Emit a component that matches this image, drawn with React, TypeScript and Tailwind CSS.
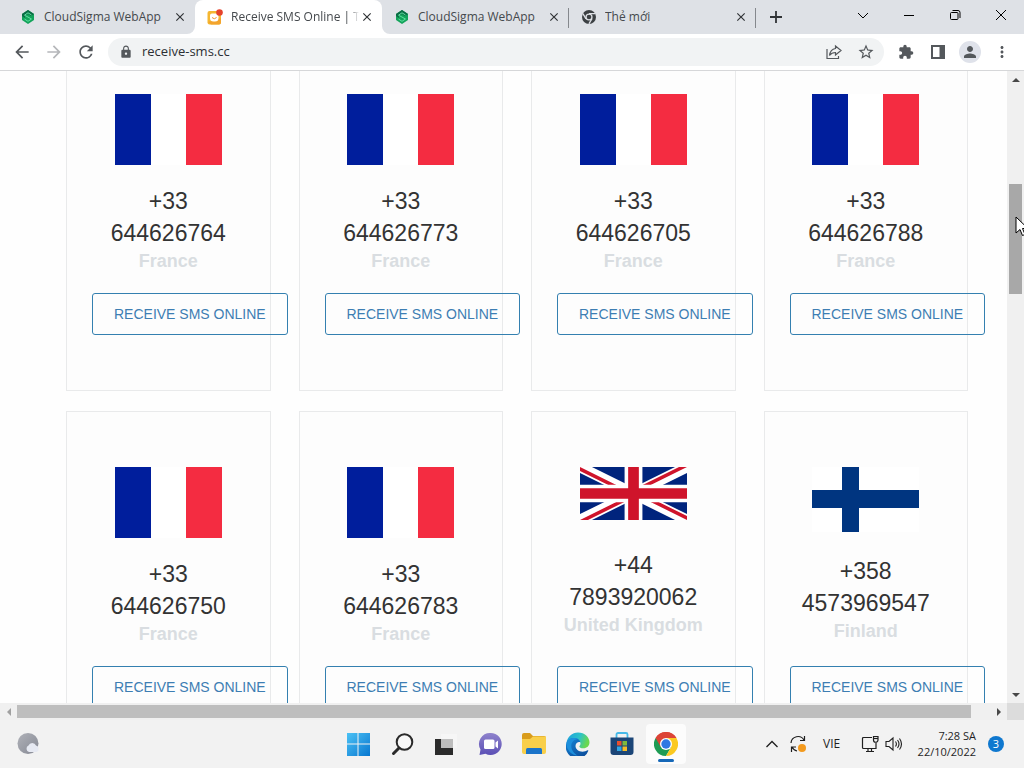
import React from 'react';
import clsx from 'clsx';
import {
  MdArrowBack,
  MdArrowForward,
  MdClose,
  MdExtension,
  MdLock,
  MdMoreVert,
  MdPerson,
  MdRefresh,
  MdStarBorder,
} from 'react-icons/md';

type Country = 'France' | 'United Kingdom' | 'Finland';

interface PhoneNumber {
  prefix: string;
  number: string;
  country: Country;
}

const phoneNumbers: PhoneNumber[] = [
  { prefix: '+33', number: '644626764', country: 'France' },
  { prefix: '+33', number: '644626773', country: 'France' },
  { prefix: '+33', number: '644626705', country: 'France' },
  { prefix: '+33', number: '644626788', country: 'France' },
  { prefix: '+33', number: '644626750', country: 'France' },
  { prefix: '+33', number: '644626783', country: 'France' },
  { prefix: '+44', number: '7893920062', country: 'United Kingdom' },
  { prefix: '+358', number: '4573969547', country: 'Finland' },
];

/* ---------- Flags ---------- */

const Flag: React.FC<{ country: Country }> = ({ country }) => {
  if (country === 'United Kingdom') {
    return (
      <svg viewBox="0 0 60 30" className="h-[53px] w-[107px]" preserveAspectRatio="none" role="img" aria-label={country}>
        <clipPath id="uk-diagonals">
          <path d="M30 15h30v15zM30 15v15H0zM30 15H0V0zM30 15V0h30z" />
        </clipPath>
        <path d="M0 0h60v30H0z" fill="#00247d" />
        <path d="M0 0l60 30M60 0L0 30" stroke="#fff" strokeWidth="6" />
        <path d="M0 0l60 30M60 0L0 30" clipPath="url(#uk-diagonals)" stroke="#cf142b" strokeWidth="4" />
        <path d="M30 0v30M0 15h60" stroke="#fff" strokeWidth="10" />
        <path d="M30 0v30M0 15h60" stroke="#cf142b" strokeWidth="6" />
      </svg>
    );
  }

  if (country === 'Finland') {
    return (
      <svg viewBox="0 0 107 65" className="h-[65px] w-[107px]" role="img" aria-label={country}>
        <path d="M0 0h107v65H0z" fill="#fff" />
        <path d="M30 0h17v65H30zM0 23h107v18H0z" fill="#003580" />
      </svg>
    );
  }

  return (
    <svg viewBox="0 0 107 71" className="h-[71px] w-[107px]" role="img" aria-label={country}>
      <path d="M0 0h36v71H0z" fill="#001e9c" />
      <path d="M36 0h35v71H36z" fill="#fff" />
      <path d="M71 0h36v71H71z" fill="#f42c41" />
    </svg>
  );
};

/* ---------- Tab icons ---------- */

const CloudSigmaIcon = () => (
  <svg viewBox="0 0 16 16" className="size-4 shrink-0">
    <path d="M8 1l6 4v6l-6 4-6-4V5z" fill="#12a35a" />
    <path d="M8 1l6 4-3 2-3-2-3 2v2L2 7V5z" fill="#0b6b45" />
    <path d="M11.500 6L8 3.800 4.500 6.200 11.500 10 8 12.300 4.500 10" fill="none" stroke="#5fe0a0" strokeWidth="1" />
  </svg>
);

const SmsIcon = () => (
  <svg viewBox="0 0 16 16" className="size-4 shrink-0">
    <rect x="0.500" y="2" width="13.500" height="13.500" rx="2" fill="#f5b731" />
    <path d="M1 13l3 2.500h8a2 2 0 0 0 2-2V9z" fill="#f3a42c" />
    <path d="M3 6.500a2 2 0 0 1 2-2h4.500l2 2.500v2a3.500 3.500 0 0 1-3.500 3.500H6.500A3.500 3.500 0 0 1 3 9z" fill="#fff" />
    <path d="M5 8.500q2.300 2.500 4.600 0" fill="none" stroke="#f0932b" strokeWidth="1" />
    <circle cx="12.500" cy="3.500" r="3.300" fill="#e5432d" />
  </svg>
);

const ChromeMonoIcon = () => (
  <svg viewBox="0 0 16 16" className="size-4 shrink-0">
    <circle cx="8" cy="8" r="7" fill="#3c4043" />
    <path d="M8 4.600h6.300M5 9.800L1.900 4.600M11 9.700l-3.100 5.200" stroke="#dee1e6" strokeWidth="1.300" />
    <circle cx="8" cy="8" r="3.600" fill="#dee1e6" />
    <circle cx="8" cy="8" r="2.300" fill="#3c4043" />
  </svg>
);

interface Tab {
  title: string;
  icon: React.ReactNode;
  active?: boolean;
  separator?: boolean;
}

const tabs: Tab[] = [
  { title: 'CloudSigma WebApp', icon: <CloudSigmaIcon /> },
  { title: 'Receive SMS Online | T', icon: <SmsIcon />, active: true },
  { title: 'CloudSigma WebApp', icon: <CloudSigmaIcon />, separator: true },
  { title: 'Thẻ mới', icon: <ChromeMonoIcon />, separator: true },
];

const windowControls = [
  { label: 'Search tabs', path: 'M1 4l5 5 5-5' },
  { label: 'Minimize', path: 'M1 6.500h10' },
  { label: 'Restore', path: 'M3 3.500h5a1 1 0 0 1 1 1v5a1 1 0 0 1-1 1H2.500a1 1 0 0 1-1-1V4.500a1 1 0 0 1 1-1zM3.500 1.500H9a2 2 0 0 1 2 2V9' },
  { label: 'Close', path: 'M1 1l10 10M11 1L1 11' },
];

const TabStrip = () => (
  <div className="flex h-[34px] shrink-0 bg-[#dee1e6] pl-2">
    <div className="flex min-w-0 flex-1">
      {tabs.map((tab, i) => (
        <div
          key={i}
          className={clsx(
            'relative flex w-[187px] min-w-0 items-center pr-[7px] pl-3',
            tab.active && 'rounded-t-lg bg-white',
          )}
        >
          {tab.icon}
          <span
            className={clsx(
              'ml-2 min-w-0 flex-1 overflow-hidden text-xs whitespace-nowrap text-[#45494d]',
              tab.active && 'mask-r-from-92%',
            )}
          >
            {tab.title}
          </span>
          <button type="button" aria-label="Close tab" className="grid size-4 shrink-0 place-items-center text-[#303336]">
            <MdClose className="size-3.5" />
          </button>
          {tab.active && (
            <>
              <svg viewBox="0 0 8 8" className="absolute bottom-0 -left-2 size-2">
                <path d="M8 0v8H0a8 8 0 0 0 8-8z" fill="#fff" />
              </svg>
              <svg viewBox="0 0 8 8" className="absolute -right-2 bottom-0 size-2">
                <path d="M0 0v8h8a8 8 0 0 1-8-8z" fill="#fff" />
              </svg>
            </>
          )}
          {tab.separator && <span className="absolute top-2 right-0 h-5 w-px bg-[#85888d]" />}
        </div>
      ))}
      <button type="button" aria-label="New tab" className="grid w-10 shrink-0 place-items-center text-[#303336]">
        <svg viewBox="0 0 12 12" className="size-3">
          <path d="M6 0v12M0 6h12" stroke="currentColor" strokeWidth="1.800" />
        </svg>
      </button>
    </div>
    {windowControls.map((control) => (
      <button
        key={control.label}
        type="button"
        aria-label={control.label}
        className="grid h-[30px] w-[46px] shrink-0 place-items-center text-black"
      >
        <svg viewBox="0 0 12 12" className="size-3" fill="none" stroke="currentColor">
          <path d={control.path} />
        </svg>
      </button>
    ))}
  </div>
);

const ToolButton: React.FC<{ label: string; children: React.ReactNode; muted?: boolean }> = ({
  label,
  children,
  muted,
}) => (
  <button
    type="button"
    aria-label={label}
    className={clsx('grid w-8 shrink-0 place-items-center', muted ? 'text-[#b5b7ba]' : 'text-[#54585c]')}
  >
    {children}
  </button>
);

const Toolbar = () => (
  <div className="flex h-[37px] shrink-0 items-center border-b border-[#d6d7d9] bg-white px-1.5">
    <ToolButton label="Back">
      <MdArrowBack className="size-5" />
    </ToolButton>
    <ToolButton label="Forward" muted>
      <MdArrowForward className="size-5" />
    </ToolButton>
    <ToolButton label="Reload">
      <MdRefresh className="size-5" />
    </ToolButton>
    <div className="mx-1.5 flex h-7 min-w-0 flex-1 items-center rounded-full bg-[#f1f3f4] pr-0.5 pl-[11px]">
      <MdLock className="size-3.5 shrink-0 text-[#54585c]" />
      <input
        type="text"
        aria-label="Address"
        defaultValue="receive-sms.cc"
        className="ml-[9px] min-w-0 flex-1 bg-transparent text-[13px] text-[#2c2f33] outline-none"
      />
      <ToolButton label="Share">
        <svg viewBox="0 0 16 16" className="size-4" fill="none" stroke="currentColor" strokeWidth="1.200">
          <path d="M1 5v9.500h11.500V12" />
          <path d="M9.500 2L15 6.500 9.500 11V8.500C7 8.500 5 9.300 3.500 11.500 4 7.500 6 5 9.500 4.500z" />
        </svg>
      </ToolButton>
      <ToolButton label="Bookmark">
        <MdStarBorder className="size-[18px]" />
      </ToolButton>
    </div>
    <ToolButton label="Extensions">
      <MdExtension className="size-4" />
    </ToolButton>
    <ToolButton label="Side panel">
      <svg viewBox="0 0 14 14" className="size-3.5">
        <path d="M1 1h12v12H1z" fill="none" stroke="currentColor" strokeWidth="2" />
        <path d="M8.500 1H13v12H8.500z" fill="currentColor" />
      </svg>
    </ToolButton>
    <ToolButton label="Profile">
      <span className="grid size-[22px] place-items-center rounded-full bg-[#dfe2ea]">
        <MdPerson className="size-[18px]" />
      </span>
    </ToolButton>
    <ToolButton label="Menu">
      <MdMoreVert className="size-[18px]" />
    </ToolButton>
  </div>
);

/* ---------- Page ---------- */

const NumberCard: React.FC<{ phone: PhoneNumber }> = ({ phone }) => (
  <article className="flex flex-col justify-between gap-5 border border-[#e9eaeb] bg-[#fdfdfd] px-[25px] py-[55px]">
    <div className="flex justify-center">
      <Flag country={phone.country} />
    </div>
    <div className="text-center">
      <h2 className="text-[23px] leading-8 text-[#333]">
        {phone.prefix} {phone.number}
      </h2>
      <p className="text-lg leading-6 font-bold text-[#d9dde1]">{phone.country}</p>
    </div>
    <a
      href="#"
      className="self-start rounded-[3px] border border-[#3480b0] px-[21px] text-sm leading-10 whitespace-nowrap text-[#3d7eb3]"
    >
      RECEIVE SMS ONLINE
    </a>
  </article>
);

const Arrow: React.FC<{ path: string; muted?: boolean }> = ({ path, muted }) => (
  <span className="grid size-[17px] shrink-0 place-items-center">
    <svg viewBox="0 0 8 8" className={clsx('size-2', muted ? 'text-[#a0a0a0]' : 'text-[#484848]')}>
      <path d={path} fill="currentColor" />
    </svg>
  </span>
);

const VerticalScrollbar = () => (
  <div className="relative flex w-[17px] shrink-0 flex-col items-center bg-[#f0f0f0]">
    <Arrow path="M0 6l4-4 4 4z" />
    <div className="mt-24 h-[110px] w-[13px] bg-[#a8a8a8]" />
    <div className="flex-1" />
    <Arrow path="M0 2l4 4 4-4z" />
    {/* Mouse pointer over the thumb */}
    <svg viewBox="0 0 13 20" className="absolute top-[145px] left-2 h-5 w-[13px]">
      <path d="M1 1v16l4-3.500 2.500 6 2.500-1-2.500-6H13z" fill="#fff" stroke="#000" strokeWidth="1" />
    </svg>
  </div>
);

const HorizontalScrollbar = () => (
  <div className="flex h-[17px] shrink-0 bg-[#f0f0f0]">
    <Arrow path="M6 0L2 4l4 4z" muted />
    <div className="mt-0.5 mr-[19px] h-[13px] flex-1 bg-[#bebebe]" />
    <Arrow path="M2 0l4 4-4 4z" />
    <div className="w-[17px] bg-[#dcdcdc]" />
  </div>
);

/* ---------- Taskbar ---------- */

const taskbarApps = [
  {
    name: 'Start',
    icon: (
      <svg viewBox="0 0 24 24" className="size-6">
        <linearGradient id="start-blue" x1="0" y1="0" x2="1" y2="1">
          <stop offset="0" stopColor="#4cc2f5" />
          <stop offset="1" stopColor="#0877d0" />
        </linearGradient>
        <path d="M1 1h10.500v10.500H1zM12.500 1H24v10.500H12.500zM1 12.500h10.500V24H1zM12.500 12.500H24V24H12.500z" fill="url(#start-blue)" />
      </svg>
    ),
  },
  {
    name: 'Search',
    icon: (
      <svg viewBox="0 0 24 24" className="size-6" fill="none" stroke="#2a2a2a">
        <circle cx="14.500" cy="10" r="7.800" fill="#f8f8f8" strokeWidth="2" />
        <path d="M9 16l-5.500 5.500" strokeWidth="3" strokeLinecap="round" />
      </svg>
    ),
  },
  {
    name: 'Task view',
    icon: (
      <svg viewBox="0 0 24 24" className="size-6">
        <path d="M1 7h18v16H1z" fill="#2b2b2b" />
        <path d="M7 2h16v14H7z" fill="#f6f6f6" />
        <path d="M7 7h12v9H7z" fill="#bdbdbd" />
      </svg>
    ),
  },
  {
    name: 'Chat',
    icon: (
      <svg viewBox="0 0 24 24" className="size-6">
        <linearGradient id="chat-purple" x1="0" y1="0" x2="0" y2="1">
          <stop offset="0" stopColor="#8f83cc" />
          <stop offset="1" stopColor="#5b4fb5" />
        </linearGradient>
        <path d="M12.500 1a11 11 0 1 1-5 20.700L1.500 23l1-5.500A11 11 0 0 1 12.500 1z" fill="url(#chat-purple)" />
        <rect x="6" y="7.500" width="10.500" height="9.500" rx="1.500" fill="#fff" />
        <path d="M17.500 10.500l2.500-2v8l-2.500-2z" fill="#fff" />
      </svg>
    ),
  },
  {
    name: 'File Explorer',
    icon: (
      <svg viewBox="0 0 26 24" className="h-6 w-[26px]">
        <path d="M1 3a2 2 0 0 1 2-2h6l3 3h11a2 2 0 0 1 2 2v5H1z" fill="#d99c1c" />
        <path d="M1 7h8l3-2.500h13V20a2 2 0 0 1-2 2H3a2 2 0 0 1-2-2z" fill="#f9cf4a" />
        <path d="M5 22v-4.500A1.500 1.500 0 0 1 6.500 16h13a1.500 1.500 0 0 1 1.500 1.500V22z" fill="#1b74c9" />
      </svg>
    ),
  },
  {
    name: 'Edge',
    icon: (
      <svg viewBox="0 0 24 24" className="size-6">
        <linearGradient id="edge-top" x1="0" y1="0" x2="1" y2="0.300">
          <stop offset="0" stopColor="#1c9fe0" />
          <stop offset="0.600" stopColor="#2cc3c8" />
          <stop offset="1" stopColor="#6bd84f" />
        </linearGradient>
        <linearGradient id="edge-bottom" x1="0" y1="0" x2="0.700" y2="1">
          <stop offset="0" stopColor="#1585d6" />
          <stop offset="1" stopColor="#0c4d9b" />
        </linearGradient>
        <path d="M.5 11C1.200 4.800 6.200.5 12 .5c6.800 0 11.500 4.800 11.500 9.800 0 3.700-2.700 6-6 6-2.800 0-4.200-1-4.200-1.800 0-.6 1.200-1.200 1.200-3 0-2.500-2.500-4.500-6-4.500-3.300 0-6.500 1.500-8 4z" fill="url(#edge-top)" />
        <path d="M.5 11c1-3 4.200-4.900 7.700-4.900 3.300 0 5.800 1.600 6.200 4.400-1-1.200-4.900-.2-4.900 3.500 0 3 3 5.700 7 5.700 2 0 3.700-.5 5-1.400.5-.3 1 .1.700.6A11.500 11.500 0 0 1 .5 11z" fill="url(#edge-bottom)" />
        <path d="M.5 11c1-3 4.200-4.900 7.700-4.900 1.500 0 2.800.3 3.900 1C8 7.200 5.300 10.500 5.300 14c0 4 2.700 7.800 6.500 9.400A11.500 11.500 0 0 1 .5 11z" fill="#1d8fdc" />
      </svg>
    ),
  },
  {
    name: 'Store',
    icon: (
      <svg viewBox="0 0 24 24" className="size-6">
        <path d="M6.500 7V2.500A1.500 1.500 0 0 1 8 1h8a1.500 1.500 0 0 1 1.500 1.500V7" fill="none" stroke="#46b9e8" strokeWidth="1.800" />
        <path d="M.5 5.500h23V20a3 3 0 0 1-3 3h-17a3 3 0 0 1-3-3z" fill="#1b4577" />
        <path d="M7 9h4.500v4.500H7z" fill="#e8502f" />
        <path d="M12.500 9H17v4.500h-4.500z" fill="#7fba3c" />
        <path d="M7 14.500h4.500V19H7z" fill="#2fa7e6" />
        <path d="M12.500 14.500H17V19h-4.500z" fill="#f6bd27" />
      </svg>
    ),
  },
  {
    name: 'Chrome',
    active: true,
    icon: (
      <svg viewBox="0 0 24 24" className="size-6">
        <path d="M12 12L1.600 6A12 12 0 0 1 22.400 6z" fill="#dc4437" />
        <path d="M12 12L1.600 6A12 12 0 0 0 12 24l5.200-9z" fill="#1e9b54" />
        <path d="M12 6h10.400A12 12 0 0 1 12 24l5.200-9z" fill="#fbc921" />
        <path d="M1.600 6L6.800 15 12 12V6h10.400A12 12 0 0 0 1.600 6z" fill="#dc4437" />
        <circle cx="12" cy="12" r="6" fill="#fff" />
        <circle cx="12" cy="12" r="4.700" fill="#3077e3" />
      </svg>
    ),
  },
];

const Taskbar = () => (
  <div className="grid h-12 shrink-0 grid-cols-[1fr_auto_1fr] items-center bg-[#f2f2f2]">
    <button type="button" aria-label="Widgets" className="ml-4 size-6 justify-self-start">
      <svg viewBox="0 0 24 24" className="size-6">
        <linearGradient id="moon-gray" x1="0" y1="0" x2="1" y2="1">
          <stop offset="0" stopColor="#b0b2b9" />
          <stop offset="1" stopColor="#858893" />
        </linearGradient>
        <circle cx="12" cy="11.500" r="10.500" fill="url(#moon-gray)" />
        <path d="M13 20a3.500 3.500 0 0 1-.5-6.500 4 4 0 0 1 7.500 0A3.400 3.400 0 0 1 20.500 20z" fill="#e6e9f2" />
      </svg>
    </button>

    <div className="flex">
      {taskbarApps.map((app) => (
        <button
          key={app.name}
          type="button"
          aria-label={app.name}
          className="relative grid h-10 w-11 place-items-center"
        >
          {app.active && <span className="absolute inset-x-0.5 inset-y-0 rounded bg-[#fcfcfc]" />}
          <span className="relative">{app.icon}</span>
          {app.active && <span className="absolute bottom-0.5 left-3.5 h-[3px] w-4 rounded-full bg-[#1668b8]" />}
        </button>
      ))}
    </div>

    <div className="flex items-center justify-self-end pr-5 text-[#1f1f1f]">
      <button type="button" aria-label="Show hidden icons" className="grid h-10 w-6 place-items-center">
        <svg viewBox="0 0 12 12" className="size-3" fill="none" stroke="currentColor" strokeWidth="1.300">
          <path d="M.5 9L6 3.500 11.500 9" />
        </svg>
      </button>
      <button type="button" aria-label="Windows Update" className="grid h-10 w-7 place-items-center">
        <svg viewBox="0 0 18 18" className="size-[18px]" fill="none" stroke="currentColor" strokeWidth="1.200">
          <path d="M2 8a7 7 0 0 1 13-3M15.500 1v4.500H11M8 16a7 7 0 0 1-5-4M2.500 17v-5H7" />
          <circle cx="13" cy="13" r="4" fill="#f39a1e" stroke="none" />
        </svg>
      </button>
      <button type="button" className="h-10 w-10 text-xs">
        VIE
      </button>
      <button type="button" aria-label="Network and volume" className="ml-2 flex h-10 w-11 items-center justify-center gap-1.5">
        <svg viewBox="0 0 18 18" className="size-[18px] shrink-0" fill="none" stroke="currentColor" strokeWidth="1.200">
          <path d="M11 2.500H2.500a1 1 0 0 0-1 1v9a1 1 0 0 0 1 1H15V8M5 16.500h8M7 13.500v3M10.500 13.500v3" />
          <path d="M12.500 1.500H17V5a2 2 0 0 1-4.500 0z" />
          <path d="M12.500 3.500H17" />
        </svg>
        <svg viewBox="0 0 18 18" className="size-[18px] shrink-0" fill="none" stroke="currentColor" strokeWidth="1.100">
          <path d="M1 6.500h3L8 3v12l-4-3.500H1z" />
          <path d="M10.500 6.500q1.800 2.500 0 5M12.500 5q3 4 0 8M14.500 3.500q4 5.500 0 11" />
        </svg>
      </button>
      <button type="button" className="ml-3.5 text-right text-[11px] leading-4">
        7:28 SA
        <br />
        22/10/2022
      </button>
      <span className="ml-3 grid size-4 place-items-center rounded-full bg-[#0f78cf] text-[11px] text-white">3</span>
    </div>
  </div>
);

const App: React.FC = () => (
  <div className="flex h-screen flex-col overflow-hidden bg-white font-['Open_Sans',sans-serif]">
    <TabStrip />
    <Toolbar />
    <div className="flex min-h-0 flex-1">
      <main className="min-w-0 flex-1 overflow-hidden bg-[#fefefe] pr-[39px] pl-[66px] font-['Liberation_Sans',Arial,sans-serif]">
        <div className="-mt-[33px] grid grid-cols-4 gap-x-7 gap-y-5">
          {phoneNumbers.map((phone) => (
            <NumberCard key={phone.number} phone={phone} />
          ))}
        </div>
      </main>
      <VerticalScrollbar />
    </div>
    <HorizontalScrollbar />
    <Taskbar />
  </div>
);

export default App;
